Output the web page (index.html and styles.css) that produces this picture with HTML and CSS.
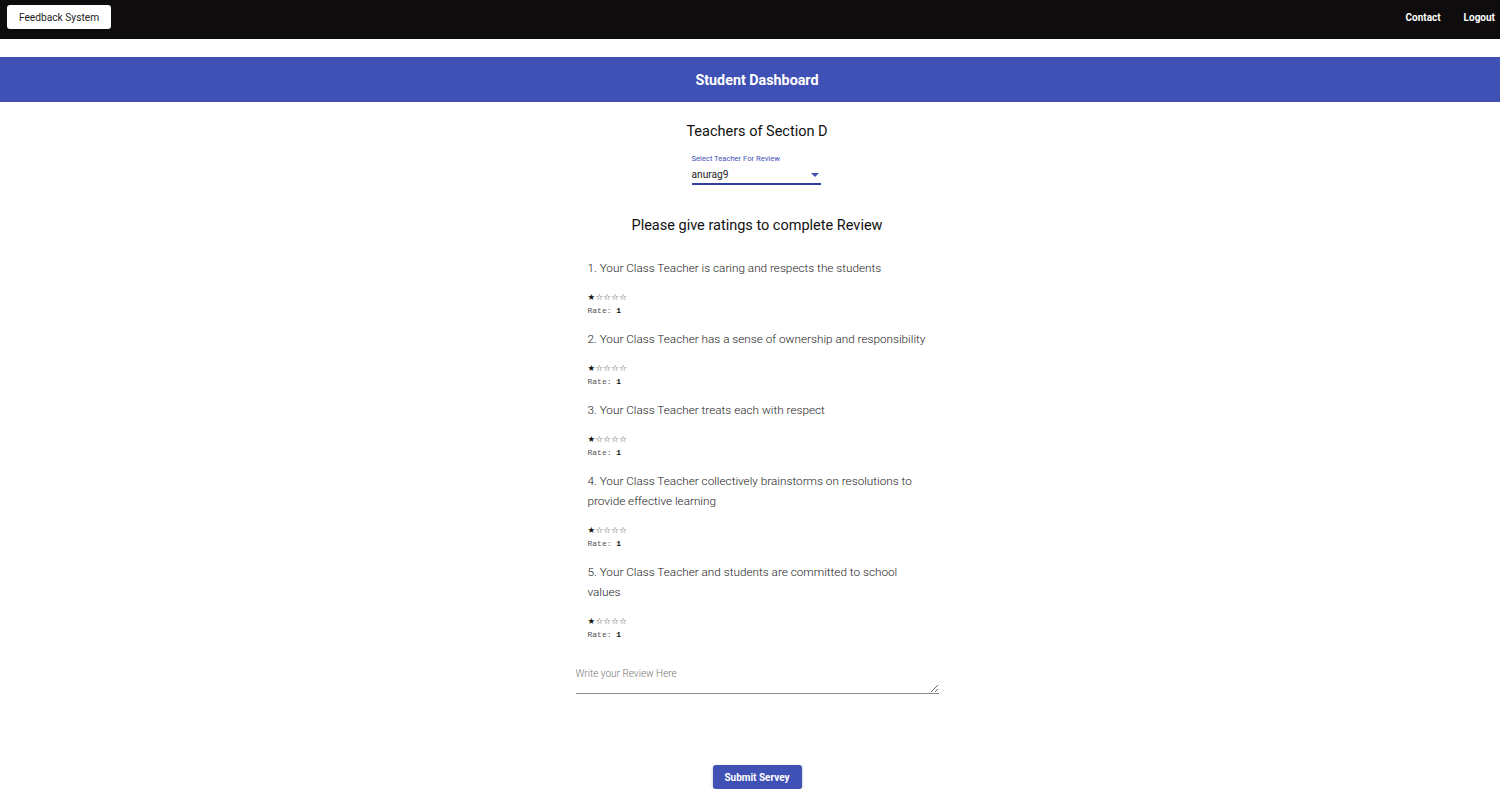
FILE: index.html
```html
<!DOCTYPE html>
<html>
<head>
<meta charset="utf-8">
<link rel="stylesheet" href="styles.css">
</head>
<body>
<header class="topbar">
  <button class="brand">Feedback System</button>
  <nav class="links">
    <a class="link">Contact</a>
    <a class="link">Logout</a>
  </nav>
</header>
<div class="banner">Student Dashboard</div>
<main class="main">
  <h2 class="title">Teachers of Section D</h2>
  <div class="select">
    <div class="select-label">Select Teacher For Review</div>
    <div class="select-field">
      <span>anurag9</span>
      <span class="arrow"></span>
    </div>
  </div>
  <h2 class="title title-2">Please give ratings to complete Review</h2>
  <div class="questions">
    <div class="q">
      <p class="q-text">1. Your Class Teacher is caring and respects the students</p>
      <div class="stars"><span class="on">★</span>☆☆☆☆</div>
      <div class="rate">Rate: <b>1</b></div>
    </div>
    <div class="q">
      <p class="q-text">2. Your Class Teacher has a sense of ownership and responsibility</p>
      <div class="stars"><span class="on">★</span>☆☆☆☆</div>
      <div class="rate">Rate: <b>1</b></div>
    </div>
    <div class="q">
      <p class="q-text">3. Your Class Teacher treats each with respect</p>
      <div class="stars"><span class="on">★</span>☆☆☆☆</div>
      <div class="rate">Rate: <b>1</b></div>
    </div>
    <div class="q">
      <p class="q-text">4. Your Class Teacher collectively brainstorms on resolutions to provide effective learning</p>
      <div class="stars"><span class="on">★</span>☆☆☆☆</div>
      <div class="rate">Rate: <b>1</b></div>
    </div>
    <div class="q">
      <p class="q-text">5. Your Class Teacher and students are committed to school values</p>
      <div class="stars"><span class="on">★</span>☆☆☆☆</div>
      <div class="rate">Rate: <b>1</b></div>
    </div>
    <textarea class="review" placeholder="Write your Review Here"></textarea>
  </div>
  <button class="submit">Submit Servey</button>
</main>
</body>
</html>
```
FILE: styles.css
```css
* { box-sizing: border-box; }
body {
  margin: 0;
  font-family: Roboto, "Liberation Sans", sans-serif;
  background: #fff;
  color: #222;
}
.topbar {
  height: 39px;
  background: #0e0c0c;
  display: flex;
  align-items: center;
  justify-content: space-between;
  padding: 0 5px 0 7px;
}
.brand {
  background: #fff;
  border: none;
  border-radius: 3px;
  height: 24px;
  width: 104px;
  font-family: Roboto, sans-serif;
  font-size: 10.2px;
  color: #222;
  padding: 0;
  margin-top: -5px;
}
.links { display: flex; gap: 23px; margin-top: -5px; }
.link {
  color: #fff;
  font-size: 10px;
  font-weight: 700;
}
.banner {
  margin-top: 18px;
  height: 45px;
  background: #3f51b5;
  color: #fff;
  font-size: 14.3px;
  font-weight: 700;
  display: flex;
  align-items: center;
  justify-content: center;
  padding-left: 14px;
}
.main {
  padding-left: 14px;
  display: flex;
  flex-direction: column;
  align-items: center;
}
.title {
  margin: 21px 0 0;
  font-size: 14.5px;
  font-weight: 400;
  line-height: 18px;
  color: #111;
}
.title-2 { margin-top: 32px; }
.select {
  margin-top: 13px;
  width: 129px;
  margin-left: -2px;
}
.select-label {
  font-size: 7.6px;
  color: #3f51b5;
  line-height: 10px;
}
.select-field {
  margin-top: 4px;
  height: 17px;
  border-bottom: 2px solid #303f9f;
  display: flex;
  justify-content: space-between;
  align-items: flex-start;
  font-size: 10.2px;
  line-height: 14px;
  color: #222;
}
.arrow {
  width: 0; height: 0;
  border-left: 4px solid transparent;
  border-right: 4px solid transparent;
  border-top: 4px solid #3f51b5;
  margin: 5px 2px 0 0;
}
.questions {
  margin-top: 23px;
  width: 363px;
  display: flex;
  flex-direction: column;
}
.q { padding-left: 12px; padding-right: 9px; margin-bottom: 11px; }
.q-text {
  margin: 0 0 12px;
  font-size: 11.75px;
  font-weight: 300;
  line-height: 20px;
  color: #222;
}
.stars {
  font-family: "DejaVu Sans", sans-serif;
  font-size: 8.5px;
  line-height: 14px;
  letter-spacing: 0.3px;
  color: #444;
}
.stars .on { color: #111; }
.rate {
  font-family: "Liberation Mono", monospace;
  font-size: 8px;
  line-height: 14px;
  color: #555;
}
.rate b { color: #111; }
.review {
  margin-top: 10px;
  width: 363px;
  height: 31px;
  border: none;
  border-bottom: 1px solid #8a8a8a;
  font-family: Roboto, sans-serif;
  font-size: 10px;
  font-weight: 300;
  padding: 5px 0 0;
  outline: none;
  resize: vertical;
}
.review::placeholder { color: #777; }
.submit {
  margin-top: 71px;
  width: 89px;
  height: 24px;
  background: #3f51b5;
  color: #fff;
  border: none;
  border-radius: 3px;
  font-family: Roboto, sans-serif;
  font-size: 10px;
  font-weight: 700;
  box-shadow: 0 1px 3px rgba(0,0,0,0.3);
}
```
